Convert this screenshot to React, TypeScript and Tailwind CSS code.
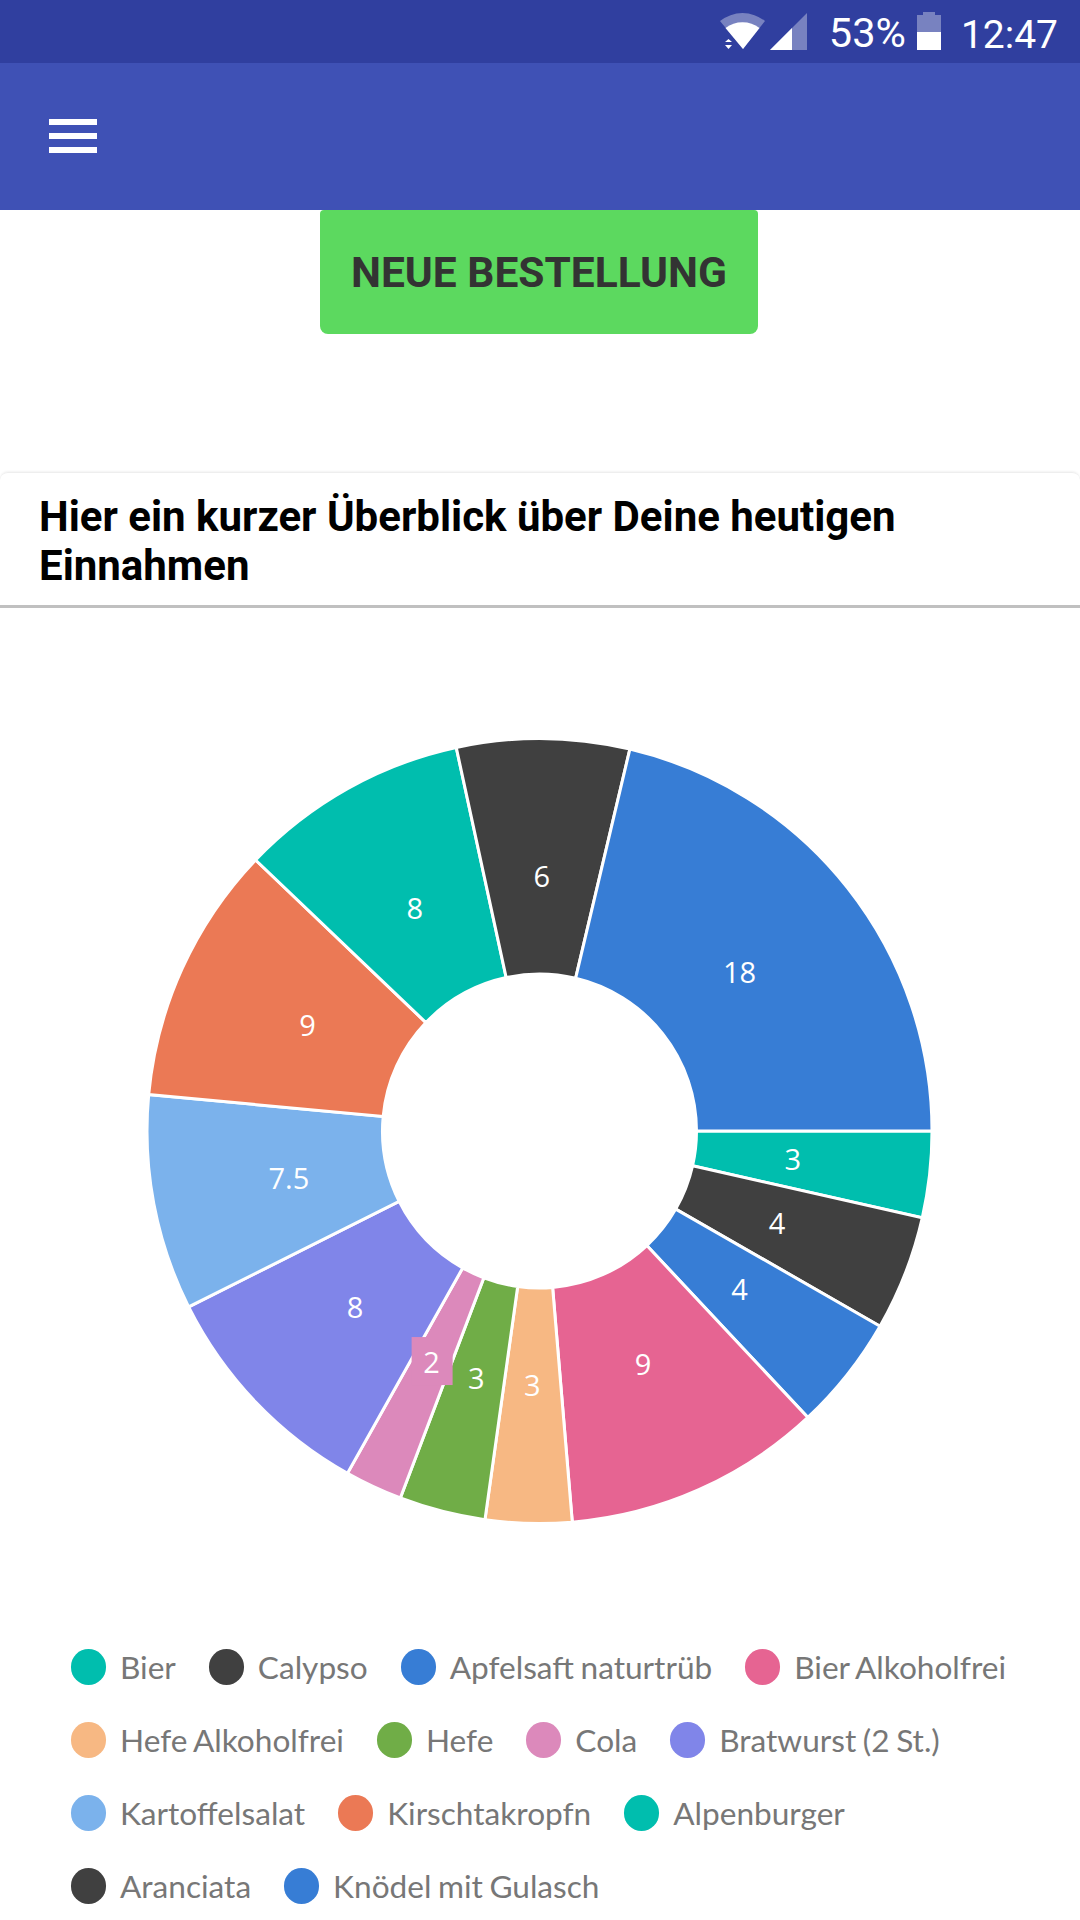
const slices = [
  { name: 'Bier', value: 3, color: '#00BEAE' },
  { name: 'Calypso', value: 4, color: '#404040' },
  { name: 'Apfelsaft naturtrüb', value: 4, color: '#377DD5' },
  { name: 'Bier Alkoholfrei', value: 9, color: '#E66492' },
  { name: 'Hefe Alkoholfrei', value: 3, color: '#F7B883' },
  { name: 'Hefe', value: 3, color: '#70AD47' },
  { name: 'Cola', value: 2, color: '#DC89BB' },
  { name: 'Bratwurst (2 St.)', value: 8, color: '#8085E9' },
  { name: 'Kartoffelsalat', value: 7.5, color: '#7BB2EC' },
  { name: 'Kirschtakropfn', value: 9, color: '#EB7955' },
  { name: 'Alpenburger', value: 8, color: '#00BEAE' },
  { name: 'Aranciata', value: 6, color: '#404040' },
  { name: 'Knödel mit Gulasch', value: 18, color: '#377DD5' },
];

const CX = 539.5;
const CY = 523;
const R = 392.5;
const INNER = 157;
const LABEL_R = 255;
const total = slices.reduce((sum, s) => sum + s.value, 0);

function polar(r: number, a: number) {
  return [CX + r * Math.cos(a), CY + r * Math.sin(a)];
}

function arcPath(start: number, end: number) {
  const [x1, y1] = polar(R, start);
  const [x2, y2] = polar(R, end);
  const [x3, y3] = polar(INNER, end);
  const [x4, y4] = polar(INNER, start);
  const large = end - start > Math.PI ? 1 : 0;
  return `M${x1} ${y1}A${R} ${R} 0 ${large} 1 ${x2} ${y2}L${x3} ${y3}A${INNER} ${INNER} 0 ${large} 0 ${x4} ${y4}Z`;
}

function DonutChart() {
  let acc = 0;
  const parts = slices.map((s) => {
    const start = (acc / total) * Math.PI * 2;
    acc += s.value;
    const end = (acc / total) * Math.PI * 2;
    const [lx, ly] = polar(LABEL_R, (start + end) / 2);
    return { ...s, start, end, lx, ly: ly - 1 };
  });
  return (
    <svg viewBox="0 0 1080 1041" className="block w-[1080px] h-[1041px]">
      {parts.map((p) => (
        <path key={p.name} d={arcPath(p.start, p.end)} fill={p.color} stroke="#fff" strokeWidth={3} />
      ))}
      {/* labels go on top, the Cola one has its own box in the app */}
      {parts.map((p) => (
        <g key={p.name}>
          {p.name === 'Cola' && <rect x={p.lx - 20} y={p.ly - 24} width={41} height={48} fill={p.color} />}
          <text
            x={p.lx}
            y={p.ly}
            textAnchor="middle"
            dominantBaseline="central"
            fill="#fff"
            fontSize={29}
            fontFamily="'Open Sans', sans-serif"
          >
            {p.value}
          </text>
        </g>
      ))}
    </svg>
  );
}

function StatusIcons() {
  return (
    <svg viewBox="0 0 87 63" className="w-[87px] h-[63px]">
      {/* wifi */}
      <path d="M0 21A36 36 0 0 1 45 21L23 49Z" fill="#fff" opacity="0.35" />
      <path d="M5.500 28A28 28 0 0 1 39.500 28L23 49Z" fill="#fff" />
      <path d="M5 42L8.500 39L12 42ZM5 45L8.500 49L12 45Z" fill="#fff" />
      {/* signal */}
      <path d="M50 50L87 13V50Z" fill="#fff" opacity="0.35" />
      <path d="M50 50L72 28V50Z" fill="#fff" />
    </svg>
  );
}

function Battery() {
  return (
    <svg viewBox="0 0 24 38" className="w-[24px] h-[38px]">
      <path d="M6 0H18V3H24V20H0V3H6Z" fill="#fff" opacity="0.35" />
      <rect x="0" y="20" width="24" height="18" fill="#fff" />
    </svg>
  );
}

export default function App() {
  return (
    <div className="w-[1080px] h-[1920px] overflow-hidden bg-white font-['Roboto',sans-serif]">
      {/* Status bar */}
      <div className="h-[63px] bg-[#303F9F] flex items-center justify-end text-white text-[39px] pr-[22px]">
        <StatusIcons />
        <span className="ml-[22px] pt-[4px] text-[41.5px]">53%</span>
        <div className="ml-[11px] mt-[-1px]">
          <Battery />
        </div>
        <span className="ml-[20px] pt-[7px]">12:47</span>
      </div>

      {/* App bar */}
      <div className="h-[147px] bg-[#3F51B5] flex items-center pl-[49px]">
        <div className="flex flex-col gap-[8px] w-[48px] mt-[-1px]">
          <div className="h-[6px] bg-white" />
          <div className="h-[6px] bg-white" />
          <div className="h-[6px] bg-white" />
        </div>
      </div>

      <div className="flex justify-center">
        <button className="w-[438px] h-[124px] ml-[-2px] pt-[2px] bg-[#5CD95F] rounded-b-[8px] rounded-t-[4px] text-[42.5px] font-bold text-[#333]">
          NEUE BESTELLUNG
        </button>
      </div>

      {/* Card */}
      <div className="mt-[138px] rounded-t-[8px] border-t border-[#eee] shadow-[0_-1px_2px_rgba(0,0,0,0.05)]">
        <h2 className="h-[135px] pl-[39px] pr-[39px] pt-[19px] text-[42px] leading-[49px] font-bold text-black border-b-[3px] border-[#c0c0c0]">
          Hier ein kurzer Überblick über Deine heutigen Einnahmen
        </h2>
        <DonutChart />
        <div className="flex flex-wrap pl-[71px] w-[1058px] font-['Lato',sans-serif] text-[31.6px] text-[#777] gap-y-[37px] [word-spacing:-1.5px]">
          {slices.map((s) => (
            <div key={s.name} className="flex items-center h-[36px] mr-[33px] whitespace-nowrap">
              <span className="w-[35px] h-[36px] rounded-full mr-[14px]" style={{ backgroundColor: s.color }} />
              <span className="pt-[2px]">{s.name}</span>
            </div>
          ))}
        </div>
      </div>
    </div>
  );
}
